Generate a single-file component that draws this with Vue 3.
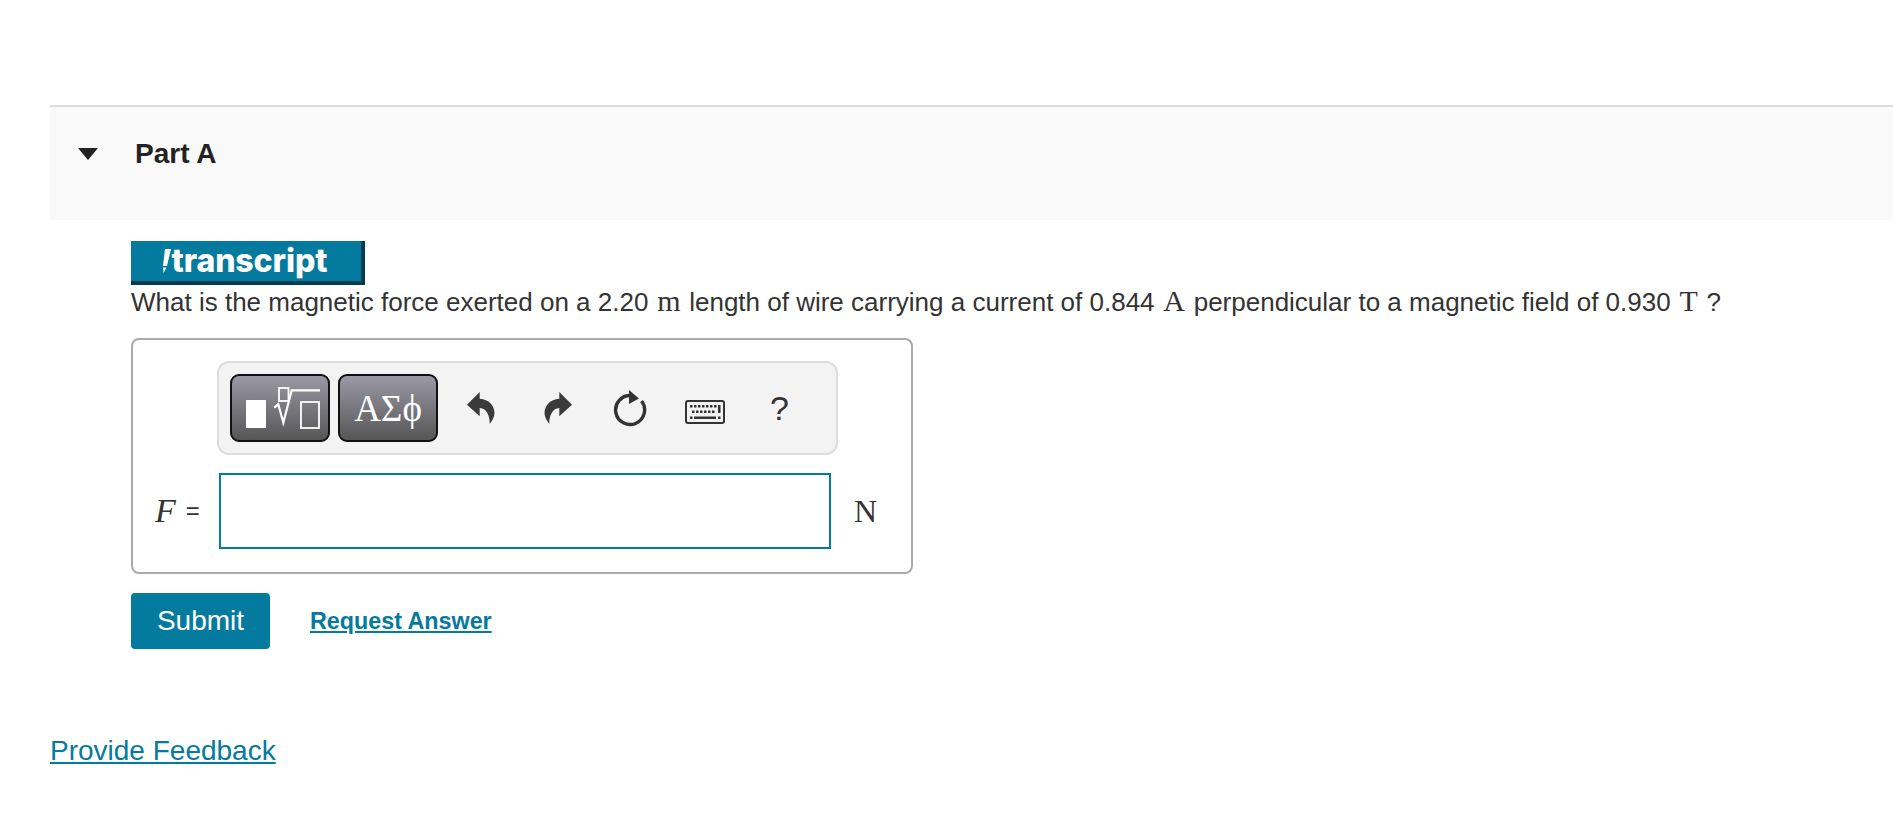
<template>
  <div class="page">
    <div class="part-head">
      <span class="caret"></span>
      <h2 class="part-title">Part A</h2>
    </div>

    <div class="part-body">
      <div class="brand">
        <svg class="pencil" width="9" height="24" viewBox="0 0 9 24">
          <path d="M3 0h6L5 17H1zM1 18.500h3.500L1.500 24z" fill="#fff" />
        </svg>
        <span class="brand-text">transcript</span>
      </div>
      <p class="question">
        What is the magnetic force exerted on a 2.20 <span class="unit">m</span> length of wire carrying a current of 0.844
        <span class="unit">A</span> perpendicular to a magnetic field of 0.930 <span class="unit">T</span> ?
      </p>

      <div class="answer-box">
        <div class="toolbar">
          <button class="tool-btn templates">
            <svg width="96" height="64" viewBox="0 0 96 64">
              <rect x="14" y="24" width="20" height="28" fill="#fff" />
              <rect x="47" y="12" width="9.500" height="13" fill="none" stroke="#fff" stroke-width="1.800" />
              <path d="M42.300 31.700l4-3.400 5 18.400 8.400-32.400H88" fill="none" stroke="#fff" stroke-width="2.200" />
              <rect x="69" y="26" width="18" height="26" fill="none" stroke="#fff" stroke-width="1.800" />
            </svg>
          </button>
          <button class="tool-btn symbols">ΑΣϕ</button>

          <svg class="icon undo" width="28" height="32" viewBox="0 0 28 32">
            <path :d="arrowPath" fill="#3a3a3a" />
          </svg>
          <svg class="icon redo" width="28" height="32" viewBox="0 0 28 32">
            <path :d="arrowPath" fill="#3a3a3a" transform="matrix(-1 0 0 1 28 0)" />
          </svg>
          <svg class="icon reset" width="34" height="38" viewBox="0 0 34 38">
            <path d="M18 6.500A14.500 14.500 0 1 0 28.500 12" fill="none" stroke="#333" stroke-width="3.400" />
            <path d="M16 1l10 8.500L16 15z" fill="#333" />
          </svg>
          <svg class="icon keyboard" width="40" height="24" viewBox="0 0 40 24">
            <rect x="1" y="1" width="38" height="22" rx="2" fill="none" stroke="#333" stroke-width="2" />
            <g v-for="row in keyRows" :key="row.y">
              <rect v-for="x in row.xs" :key="x" :x="x" :y="row.y" width="2.500" height="2.500" fill="#333" />
            </g>
            <rect x="33" y="5" width="2.500" height="8" fill="#333" />
            <rect x="9" y="16.500" width="22" height="2.500" fill="#333" />
          </svg>
          <span class="help">?</span>
        </div>

        <div class="input-row">
          <span class="label"><var>F</var><span class="eq">=</span></span>
          <div class="input"></div>
          <span class="unit-n">N</span>
        </div>
      </div>

      <div class="actions">
        <button class="submit">Submit</button>
        <a class="request" href="#">Request Answer</a>
      </div>
    </div>

    <a class="feedback" href="#">Provide Feedback</a>
  </div>
</template>

<script setup>
const arrowPath = 'M0 12.700L12.700 0v6.700C22 7 27.500 14 27.500 21c0 4-2.500 8-4.800 11C23 25 20 16 12.700 16v8.300z'

const keyRows = [
  { y: 5, xs: [5, 9, 13, 17, 21, 25, 29] },
  { y: 10.5, xs: [7, 11, 15, 19, 23, 27] },
  { y: 16.5, xs: [5, 33] }
]
</script>

<style>
html,
body {
  background: #fff;
}
</style>

<style scoped>
.page {
  padding: 105px 0 0 50px;
  font-family: "Liberation Sans", Arial, sans-serif;
  color: #333;
}

.part-head {
  display: flex;
  align-items: center;
  height: 93px;
  border-top: 2px solid #ddd;
  background: #f9f9f9;
  padding-left: 28px;
  padding-bottom: 20px;
}

.caret {
  width: 0;
  height: 0;
  border-left: 10.5px solid transparent;
  border-right: 10.5px solid transparent;
  border-top: 12px solid #222;
}

.part-title {
  margin: 0 0 0 37px;
  font-size: 28px;
  font-weight: bold;
  color: #222;
}

.part-body {
  padding: 21px 0 0 81px;
}

.brand {
  display: flex;
  justify-content: center;
  align-items: center;
  gap: 1px;
  width: 234px;
  height: 44px;
  box-sizing: border-box;
  padding-right: 3px;
  background: #057a9f;
  border-right: 4px solid #003c4f;
  border-bottom: 4px solid #003c4f;
}

.brand-text {
  font-family: Inter, sans-serif;
  font-weight: 800;
  font-size: 32px;
  line-height: 1;
  letter-spacing: -0.1px;
  color: #fff;
}

.question {
  margin: 0;
  height: 53px;
  padding-top: 1px;
  box-sizing: border-box;
  font-size: 26px;
  line-height: 30px;
  white-space: nowrap;
}

.unit {
  margin: 0 1.5px;
  font-family: "Liberation Serif", serif;
  font-size: 30px;
}

.answer-box {
  width: 782px;
  height: 236px;
  box-sizing: border-box;
  border: 2px solid #aaa;
  border-radius: 8px;
  padding: 21px 0 0 84px;
}

.toolbar {
  display: flex;
  align-items: center;
  width: 621px;
  height: 94px;
  box-sizing: border-box;
  background: #f3f3f3;
  border: 2px solid #ddd;
  border-radius: 12px;
  padding: 0 0 0 11px;
}

.tool-btn {
  display: flex;
  align-items: center;
  justify-content: center;
  width: 100px;
  height: 68px;
  padding: 0;
  border: 2px solid #111;
  border-radius: 9px;
  background: linear-gradient(#9b99a5, #565656);
  color: #fff;
  font-family: "Liberation Serif", serif;
  font-size: 37px;
}

.symbols {
  margin-left: 8px;
}

.undo {
  margin-left: 29px;
}

.redo {
  margin-left: 49px;
}

.reset {
  margin-left: 41px;
}

.keyboard {
  margin: 8px 0 0 38px;
}

.help {
  margin-left: 45px;
  font-size: 34px;
}

.input-row {
  display: flex;
  align-items: center;
  margin: 18px 0 0 -66px;
}

.label {
  display: flex;
  align-items: center;
  width: 68px;
  box-sizing: border-box;
  padding-left: 4px;
  font-size: 24px;
  white-space: nowrap;
}

.label var {
  font-family: "Liberation Serif", serif;
  font-size: 34px;
  font-style: italic;
}

.eq {
  margin-left: 10px;
}

.input {
  width: 612px;
  height: 76px;
  box-sizing: border-box;
  border: 2px solid #057a9f;
  background: #fff;
}

.unit-n {
  margin-left: 23px;
  font-family: "Liberation Serif", serif;
  font-size: 32px;
}

.actions {
  display: flex;
  align-items: center;
  margin-top: 19px;
}

.submit {
  width: 139px;
  height: 56px;
  padding: 0;
  border: 0;
  border-radius: 4px;
  background: #057a9f;
  color: #fff;
  font-family: "Liberation Sans", Arial, sans-serif;
  font-size: 28px;
}

.request {
  margin-left: 40px;
  color: #057a9f;
  font-size: 23.3px;
  font-weight: bold;
}

.feedback {
  display: inline-block;
  margin-top: 86px;
  color: #057a9f;
  font-size: 28px;
}
</style>
